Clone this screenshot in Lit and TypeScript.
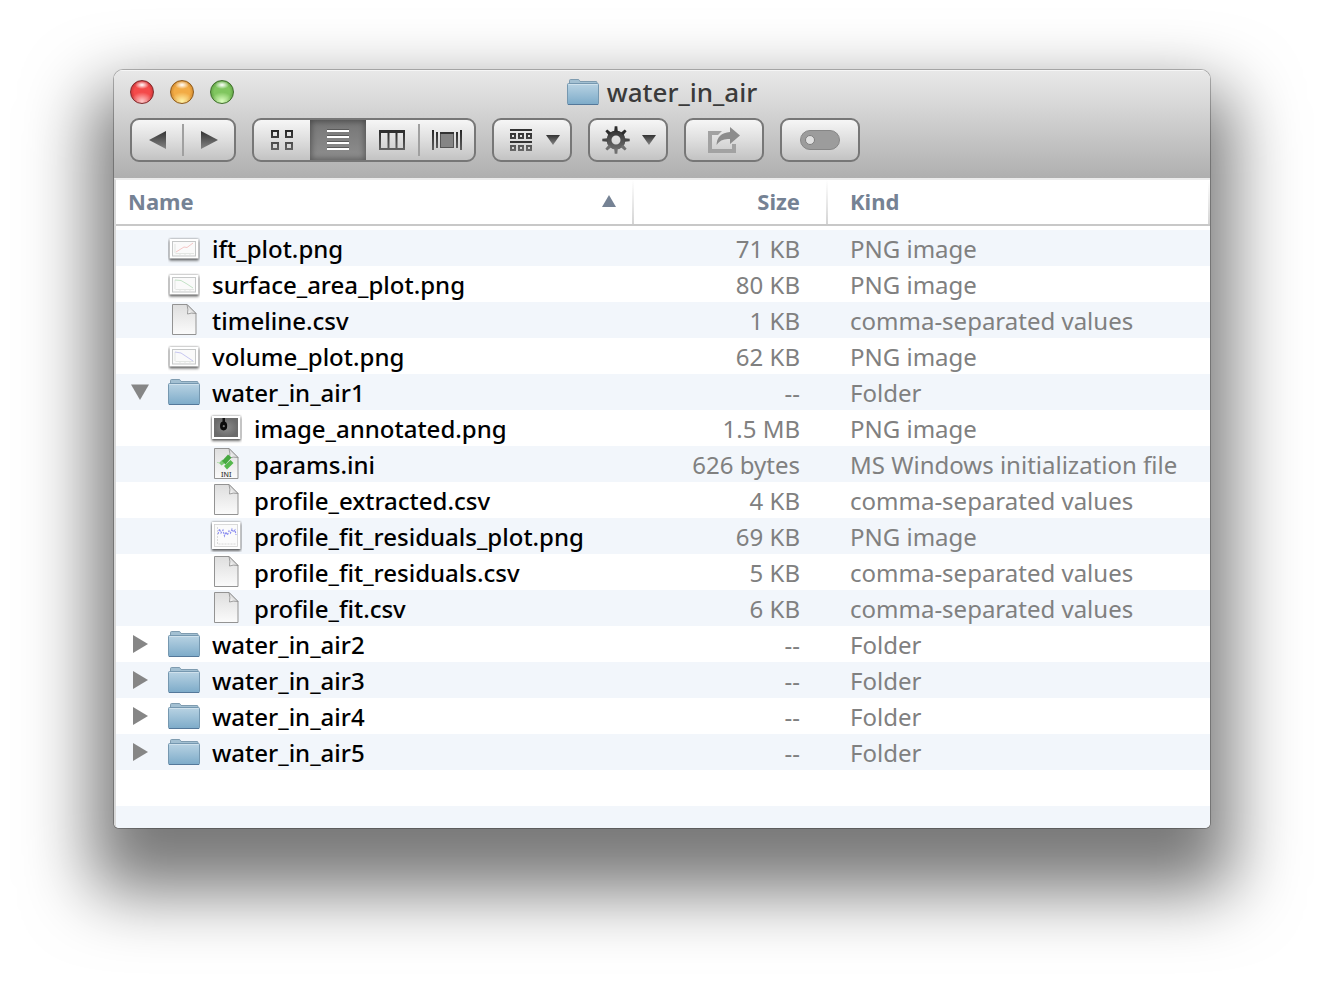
import { LitElement, html, svg, css, nothing } from "lit";
import { customElement, state } from "lit/decorators.js";
import { classMap } from "lit/directives/class-map.js";

type IconName = "ift" | "area" | "volume" | "doc" | "ini" | "photo" | "residuals" | "folder";

interface Entry {
  name: string;
  size: string;
  kind: string;
  icon: IconName;
  children?: Entry[];
}

const PNG = "PNG image";
const CSV = "comma-separated values";

const folder = (name: string, children: Entry[] = []): Entry => ({
  name, size: "--", kind: "Folder", icon: "folder", children,
});

const ENTRIES: Entry[] = [
  { name: "ift_plot.png", size: "71 KB", kind: PNG, icon: "ift" },
  { name: "surface_area_plot.png", size: "80 KB", kind: PNG, icon: "area" },
  { name: "timeline.csv", size: "1 KB", kind: CSV, icon: "doc" },
  { name: "volume_plot.png", size: "62 KB", kind: PNG, icon: "volume" },
  folder("water_in_air1", [
    { name: "image_annotated.png", size: "1.5 MB", kind: PNG, icon: "photo" },
    { name: "params.ini", size: "626 bytes", kind: "MS Windows initialization file", icon: "ini" },
    { name: "profile_extracted.csv", size: "4 KB", kind: CSV, icon: "doc" },
    { name: "profile_fit_residuals_plot.png", size: "69 KB", kind: PNG, icon: "residuals" },
    { name: "profile_fit_residuals.csv", size: "5 KB", kind: CSV, icon: "doc" },
    { name: "profile_fit.csv", size: "6 KB", kind: CSV, icon: "doc" },
  ]),
  folder("water_in_air2"),
  folder("water_in_air3"),
  folder("water_in_air4"),
  folder("water_in_air5"),
];

const gradients = html`
  <svg class="defs" width="0" height="0" aria-hidden="true">
    <defs>
      <linearGradient id="g-folder" x1="0" y1="0" x2="0" y2="1">
        <stop offset="0" stop-color="#b9d3e3" /><stop offset="1" stop-color="#7dabc9" />
      </linearGradient>
      <linearGradient id="g-doc" x1="0" y1="0" x2="0" y2="1">
        <stop offset="0" stop-color="#dedede" /><stop offset="1" stop-color="#fbfbfb" />
      </linearGradient>
      <linearGradient id="g-fold" x1="0" y1="1" x2="1" y2="0">
        <stop offset="0" stop-color="#ffffff" /><stop offset="1" stop-color="#b8b8b8" />
      </linearGradient>
      <linearGradient id="g-ink" gradientUnits="userSpaceOnUse" x1="0" y1="0" x2="0" y2="28">
        <stop offset="0" stop-color="#262626" /><stop offset="1" stop-color="#7a7a7a" />
      </linearGradient>
      <linearGradient id="g-tri" x1="0" y1="0" x2="0" y2="1">
        <stop offset="0" stop-color="#333333" /><stop offset="1" stop-color="#858585" />
      </linearGradient>
      <radialGradient id="g-photo">
        <stop offset="0" stop-color="#8c8c8c" /><stop offset="1" stop-color="#6b6b6b" />
      </radialGradient>
    </defs>
  </svg>`;

const folderShape = svg`
  <path d="M2.5 8V4.6Q2.5 3.5 3.6 3.5H11Q12 3.5 12.4 4.3L13 5.5H29Q30 5.5 30 6.5V8Z" fill="#a3c0d2" stroke="#7f9cb0" />
  <rect x="0.5" y="7.5" width="31" height="21" rx="1" fill="url(#g-folder)" stroke="#7698b0" />
  <path d="M1.5 8.5H30.5" stroke="#cfe1ec" />
  <path d="M1 28.5H31" stroke="#54789a" />`;

const page = svg`
  <path d="M4.5 0.5H19L28 9.5V30.5H4.5Z" fill="url(#g-doc)" stroke="#939393" />
  <path d="M19 0.5Q20.5 6 19.5 10Q23 8.5 28 9.5Z" fill="url(#g-fold)" stroke="#8c8c8c" stroke-width="0.8" />`;

const plot = (color: string, points: string) => svg`
  <rect class="print" x="1.5" y="7" width="29" height="19.5" fill="#fff" />
  <rect x="4.5" y="9.5" width="23" height="14.5" fill="#fafafa" stroke="#c6c8c8" />
  <path d="M7.5 21.5H26M7 12V21M12 23V22M17 23V22M22 23V22" stroke="#d8dcd8" stroke-width="0.7" fill="none" />
  <polyline points=${points} fill="none" stroke=${color} stroke-width="0.8" />`;

const ICONS: Record<IconName, unknown> = {
  folder: folderShape,
  doc: page,
  ini: svg`${page}
    <path d="M9 15L12.5 11.5L14.5 15.5L11.5 17.5Z" fill="#7ccb74" />
    <path d="M12 13L18 6.5L21.5 9.5L15.5 16.5Z" fill="#46a83f" />
    <path d="M14 18L20.5 12L23.5 15L17 21.5Z" fill="#55b84c" />
    <path d="M7.5 14L8.6 15.2" stroke="#8fd688" />
    <text x="16.2" y="28.5" text-anchor="middle" class="ini">INI</text>`,
  ift: plot("#f3b9b9", "8,20 16,15 19,15.5 25,11"),
  area: plot("#b5dcb9", "7,12 13,12.5 19,16 25,20"),
  volume: plot("#b9b9ee", "7,12 13,13 19,17 25,21"),
  photo: svg`
    <rect class="print" x="2" y="4" width="28.5" height="23" fill="#fff" />
    <rect x="4" y="6" width="24" height="19" fill="url(#g-photo)" />
    <rect x="12.5" y="6" width="2.5" height="5" fill="#111" />
    <ellipse cx="13.6" cy="14" rx="3.6" ry="4.4" fill="#0c0c0c" />
    <circle cx="13.8" cy="14.2" r="1.1" fill="#777" />`,
  residuals: svg`
    <rect class="print" x="2" y="2" width="28.5" height="27" fill="#fff" />
    <rect x="4.5" y="4.5" width="23" height="22" fill="#fbfbfb" stroke="#d0d0d0" stroke-width="0.8" />
    <path d="M7.5 7V24H26" fill="none" stroke="#cccccc" stroke-width="0.7" stroke-dasharray="2 1" />
    <polyline points="8,14 9.5,9 11,13 13,10 14.5,16 16,12 17.5,15 19,11 20.5,13 22,9 23.5,12 25,10 26,15"
      fill="none" stroke="#8a8cf0" stroke-width="1.1" stroke-dasharray="2 1" />`,
};

const GEAR_TEETH = [0, 45, 90, 135, 180, 225, 270, 315];

const glyph = (w: number, h: number, body: unknown) => html`
  <svg class="glyph" width=${w} height=${h} viewBox="0 0 ${w} ${h}" aria-hidden="true">${body}</svg>`;

const caret = glyph(14, 10, svg`<path d="M0 0H14L7 10Z" fill="url(#g-tri)" />`);

const GLYPHS = {
  back: glyph(17, 18, svg`<path d="M17 0V18L0 9Z" fill="url(#g-tri)" />`),
  forward: glyph(17, 18, svg`<path d="M0 0V18L17 9Z" fill="url(#g-tri)" />`),
  icons: glyph(22, 20, svg`<path d="M1 1h6v6h-6zM15 1h6v6h-6zM1 13h6v6h-6zM15 13h6v6h-6z" fill="none" stroke="url(#g-ink)" stroke-width="2" />`),
  list: glyph(22, 22, svg`
    <path d="M0 1H22M0 7H22M0 13H22M0 19H22" stroke="#5a5a5a" stroke-width="2" />
    <path d="M0 2H22M0 8H22M0 14H22M0 20H22" stroke="#fff" stroke-width="2" />`),
  columns: glyph(26, 20, svg`
    <path d="M1 1V19H25V1M9.5 1V19M17.5 1V19" fill="none" stroke="url(#g-ink)" stroke-width="2" />
    <rect width="26" height="3" fill="#303030" />`),
  flow: glyph(30, 20, svg`
    <path d="M0 0h2v20h-2zM4 2h2v16h-2zM24 2h2v16h-2zM28 0h2v20h-2z" fill="url(#g-ink)" />
    <rect x="8.5" y="2.5" width="13" height="15" fill="#858585" stroke="#555" />
    <rect x="8" y="2" width="14" height="2" fill="#333" />`),
  arrange: glyph(22, 22, svg`
    <path d="M0 0H22V2H0ZM0 12H22V14H0Z" fill="#333" />
    <path d="M1 5h4v4h-4zM9 5h4v4h-4zM17 5h4v4h-4zM1 17h4v4h-4zM9 17h4v4h-4zM17 17h4v4h-4z" fill="none" stroke="url(#g-ink)" stroke-width="2" />`),
  action: glyph(28, 28, svg`
    <circle cx="14" cy="14" r="7" fill="none" stroke="url(#g-ink)" stroke-width="5" />
    ${GEAR_TEETH.map((a) => svg`<path transform="rotate(${a} 14 14)" d="M12.2 5.5L12.7 0.3H15.3L15.8 5.5Z" fill=${a > 90 && a < 270 ? "#707070" : a === 0 || a === 45 || a === 315 ? "#2c2c2c" : "#484848"} />`)}`),
  share: glyph(32, 26, svg`
    <path d="M14 4H0V26H28V17H24V22H4V8H10Z" fill="#a2a2a2" />
    <path d="M22 0L32 8.5L22 17V12Q13 11 8.5 18Q9 6 22 5Z" fill="#8c8c8c" />`),
  toggle: glyph(40, 20, svg`
    <rect x="0.5" y="0.5" width="39" height="19" rx="9.5" fill="#9c9c9c" stroke="#868686" />
    <circle cx="10" cy="10" r="4.5" fill="#e0e0e0" stroke="#7e7e7e" />`),
};

@customElement("app-root")
export class AppRoot extends LitElement {
  @state() private open = new Set<string>(["water_in_air1"]);
  @state() private view = "list";

  static styles = css`
    :host {
      display: block;
      box-sizing: border-box;
      min-height: 100vh;
      padding: 70px 114px 158px;
      background: #fff;
      font-family: "Noto Sans", sans-serif;
      font-size: 24px;
      line-height: 34px;
      color: #000;
    }
    .defs { display: block; }
    .window {
      overflow: hidden;
      border-radius: 9px 9px 5px 5px;
      background: #fff;
      box-shadow: 0 0 0 1px rgba(0, 0, 0, 0.25), 0 42px 68px 22px rgba(0, 0, 0, 0.53);
    }
    .bar {
      display: flex;
      flex-direction: column;
      gap: 14px;
      padding: 10px 16px 16px;
      background: linear-gradient(#e9e9e9, #d0d0d0 45%, #afafaf);
      box-shadow: inset 0 1px #f6f6f6;
    }
    .titlebar {
      display: grid;
      grid-template-columns: 1fr auto 1fr;
      grid-template-rows: 24px;
      align-items: center;
    }
    .lights { display: flex; gap: 16px; }
    .light {
      width: 24px;
      height: 24px;
      padding: 0;
      border: 1px solid;
      border-radius: 50%;
    }
    .close {
      border-color: #7e2a2c;
      background: radial-gradient(ellipse 7px 4px at 50% 18%, #fff, transparent),
        radial-gradient(ellipse 11px 9px at 50% 92%, #ffc9c9, transparent),
        radial-gradient(circle, #f44a4a 50%, #a32025);
    }
    .minimize {
      border-color: #8d5a1c;
      background: radial-gradient(ellipse 7px 4px at 50% 18%, #fff, transparent),
        radial-gradient(ellipse 11px 9px at 50% 92%, #fff3a8, transparent),
        radial-gradient(circle, #f2ab45 50%, #b06a1c);
    }
    .zoom {
      border-color: #3f6e2c;
      background: radial-gradient(ellipse 7px 4px at 50% 18%, #fff, transparent),
        radial-gradient(ellipse 11px 9px at 50% 92%, #dcffc0, transparent),
        radial-gradient(circle, #80c65f 50%, #45822d);
    }
    .title {
      display: flex;
      align-items: center;
      gap: 8px;
      margin: 0;
      font-size: 26px;
      font-weight: 500;
      color: #3a3a3a;
    }
    .icon { display: block; flex: none; }
    .print {
      filter: drop-shadow(0 0 1px rgba(0, 0, 0, 0.5)) drop-shadow(0 2px 1px rgba(0, 0, 0, 0.5));
    }
    .ini { font: 500 7px "Noto Sans", sans-serif; fill: #333; }
    .toolbar { display: flex; gap: 16px; }
    .group {
      display: flex;
      align-items: center;
      box-sizing: border-box;
      height: 44px;
      border: 2px solid #777;
      border-radius: 9px;
      overflow: hidden;
      background: linear-gradient(#f6f6f6, #dedede 50%, #c3c3c3);
    }
    .tool {
      display: flex;
      align-items: center;
      justify-content: center;
      align-self: stretch;
      width: 50px;
      padding: 0;
      border: 0;
      background: none;
    }
    .col { width: 52px; }
    .seg { width: 54px; }
    .wide { width: 56px; }
    .single { width: 76px; }
    .menu { justify-content: space-between; padding: 0 10px 0 16px; }
    .gear { padding-left: 12px; }
    .pressed {
      background: linear-gradient(#757575, #8f8f8f);
      box-shadow: inset 0 0 6px 1px rgba(0, 0, 0, 0.4);
    }
    .rule { width: 2px; height: 32px; background: #a0a0a0; }
    .glyph { display: block; flex: none; }
    .list {
      border-top: 2px solid #ececec;
      border-left: 2px solid #d9d9d9;
    }
    table {
      width: 100%;
      table-layout: fixed;
      border-spacing: 0;
    }
    .col-size { width: 194px; }
    .col-kind { width: 382px; }
    th {
      height: 42px;
      padding: 0 0 2px;
      border-bottom: 2px solid #c8c8c8;
      background: linear-gradient(#fff, #d4d4d4) right / 2px 100% no-repeat;
      font-size: 22px;
      font-weight: 700;
      text-align: left;
      color: #758294;
    }
    .head {
      display: flex;
      align-items: center;
      justify-content: space-between;
      padding: 0 18px 0 12px;
    }
    tbody::before { content: ""; display: block; height: 4px; }
    td { padding: 2px 0 0; white-space: nowrap; color: #808080; }
    tr.odd td { background: #f2f6fb; }
    td.first { padding: 0; }
    .size { padding-right: 28px; text-align: right; }
    .kind { padding-left: 22px; }
    .name {
      display: flex;
      align-items: center;
      height: 36px;
      padding-left: 12px;
      font-weight: 500;
      color: #000;
    }
    .leaf { padding-left: 52px; }
    .nested { padding-left: 94px; }
    .twist {
      display: block;
      width: 24px;
      height: 24px;
      margin-right: 16px;
      padding: 0;
      border: 0;
      background: none;
    }
    .label { padding: 2px 0 0 12px; }
    .filler {
      height: 58px;
      background: repeating-linear-gradient(#fff 0 36px, #f2f6fb 36px 72px);
    }
  `;

  private toggle(name: string) {
    const next = new Set(this.open);
    if (!next.delete(name)) next.add(name);
    this.open = next;
  }

  private icon(name: IconName) {
    return html`<svg class="icon" width="32" height="32" viewBox="0 0 32 32" aria-hidden="true">${ICONS[name]}</svg>`;
  }

  private viewButton(id: "icons" | "list" | "columns" | "flow", label: string, width: string) {
    const on = this.view === id;
    return html`<button
      class=${classMap({ tool: true, [width]: true, pressed: on })}
      aria-label=${label}
      aria-pressed=${on ? "true" : "false"}
      @click=${() => (this.view = id)}
    >${GLYPHS[id]}</button>`;
  }

  private twist(e: Entry) {
    const isOpen = this.open.has(e.name);
    return html`<button class="twist" aria-label="Contents of ${e.name}" aria-expanded=${isOpen ? "true" : "false"}
      @click=${() => this.toggle(e.name)}>
      <svg class="glyph" width="24" height="24" viewBox="0 0 24 24" aria-hidden="true">
        <path d=${isOpen ? "M3 4.5H21L12 20Z" : "M5 3V21L20 12Z"} fill="#868686" />
      </svg>
    </button>`;
  }

  render() {
    const rows = ENTRIES.flatMap((e) => [
      { e, child: false },
      ...(this.open.has(e.name) ? (e.children ?? []).map((c) => ({ e: c, child: true })) : []),
    ]);
    return html`
      ${gradients}
      <main class="window">
        <header class="bar">
          <div class="titlebar">
            <div class="lights">
              <button class="light close" aria-label="Close"></button>
              <button class="light minimize" aria-label="Minimize"></button>
              <button class="light zoom" aria-label="Zoom"></button>
            </div>
            <h1 class="title">${this.icon("folder")}<span>water_in_air</span></h1>
          </div>
          <div class="toolbar">
            <div class="group">
              <button class="tool" aria-label="Back">${GLYPHS.back}</button>
              <span class="rule"></span>
              <button class="tool" aria-label="Forward">${GLYPHS.forward}</button>
            </div>
            <div class="group">
              ${this.viewButton("icons", "Icon view", "wide")}
              ${this.viewButton("list", "List view", "wide")}
              ${this.viewButton("columns", "Column view", "col")}
              <span class="rule"></span>
              ${this.viewButton("flow", "Cover flow", "seg")}
            </div>
            <div class="group">
              <button class="tool single menu" aria-label="Arrange">${GLYPHS.arrange}${caret}</button>
            </div>
            <div class="group">
              <button class="tool single menu gear" aria-label="Actions">${GLYPHS.action}${caret}</button>
            </div>
            <div class="group">
              <button class="tool single" aria-label="Share" disabled>${GLYPHS.share}</button>
            </div>
            <div class="group">
              <button class="tool single" aria-label="Edit tags" disabled>${GLYPHS.toggle}</button>
            </div>
          </div>
        </header>
        <section class="list">
          <table>
            <colgroup><col /><col class="col-size" /><col class="col-kind" /></colgroup>
            <thead>
              <tr>
                <th scope="col" aria-sort="ascending">
                  <div class="head"><span>Name</span>${glyph(14, 12, svg`<path d="M0 12H14L7 0Z" fill="#758294" />`)}</div>
                </th>
                <th scope="col" class="size">Size</th>
                <th scope="col" class="kind">Kind</th>
              </tr>
            </thead>
            <tbody>
              ${rows.map(({ e, child }, i) => html`
                <tr class=${i % 2 === 0 ? "odd" : "even"}>
                  <td class="first">
                    <div class=${classMap({ name: true, leaf: !e.children, nested: child })}>
                      ${e.children ? this.twist(e) : nothing}
                      ${this.icon(e.icon)}<span class="label">${e.name}</span>
                    </div>
                  </td>
                  <td class="size">${e.size}</td>
                  <td class="kind">${e.kind}</td>
                </tr>`)}
            </tbody>
          </table>
          <div class="filler"></div>
        </section>
      </main>
    `;
  }
}
